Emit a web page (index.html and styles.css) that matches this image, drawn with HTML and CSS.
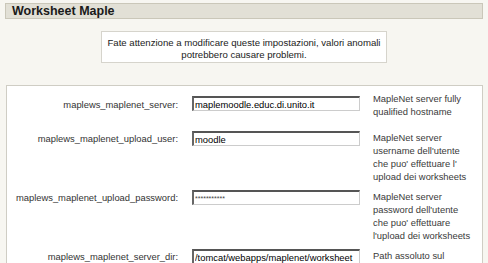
FILE: index.html
```html
<!DOCTYPE html>
<html lang="it">
<head>
    <meta charset="UTF-8">
    <title>Worksheet Maple</title>
    <link rel="stylesheet" href="styles.css">
</head>
<body>
    <h2 class="main-title">Worksheet Maple</h2>

    <div class="notice">
        Fate attenzione a modificare queste impostazioni, valori anomali<br>
        potrebbero causare problemi.
    </div>

    <div class="settings">
        <div class="setting first">
            <label class="label" for="server">maplews_maplenet_server:</label>
            <input class="field" id="server" type="text" value="maplemoodle.educ.di.unito.it">
            <div class="desc">MapleNet server fully<br>qualified hostname</div>
        </div>
        <div class="setting">
            <label class="label" for="user">maplews_maplenet_upload_user:</label>
            <input class="field" id="user" type="text" value="moodle">
            <div class="desc">MapleNet server<br>username dell'utente<br>che puo' effettuare l'<br>upload dei worksheets</div>
        </div>
        <div class="setting">
            <label class="label" for="password">maplews_maplenet_upload_password:</label>
            <input class="field secret" id="password" type="text" value="***********">
            <div class="desc">MapleNet server<br>password dell'utente<br>che puo' effettuare<br>l'upload dei worksheets</div>
        </div>
        <div class="setting">
            <label class="label" for="dir">maplews_maplenet_server_dir:</label>
            <input class="field" id="dir" type="text" value="/tomcat/webapps/maplenet/worksheet">
            <div class="desc">Path assoluto sul</div>
        </div>
    </div>
</body>
</html>
```

FILE: styles.css
```css
body {
    margin: 0;
    padding: 3px 5px 0 5px;
    background-color: #f7f6f1;
    color: #333;
    font-family: "Liberation Sans", Arial, sans-serif;
    font-size: 9.4px;
    overflow: hidden;
}

.main-title {
    margin: 0;
    padding: 0 6px;
    height: 14px;
    line-height: 14px;
    font-size: 12.5px;
    font-weight: bold;
    color: #1a1a1a;
    background-color: #e2e0d6;
    border: 1px solid #cac7b9;
}

.notice {
    width: 284px;
    margin: 12px auto 0 auto;
    padding: 5px 0;
    height: 20px;
    line-height: 12px;
    text-align: center;
    white-space: nowrap;
    background-color: #fff;
    border: 1px solid #d6d4cc;
    font-size: 9.6px;
    color: #222;
}

.settings {
    margin: 22px 0 0 1px;
    padding-top: 6px;
    background-color: #fff;
    border: 1px solid #cfcdc4;
    height: 400px;
}

.setting {
    display: flex;
    align-items: flex-start;
    margin-bottom: 7px;
}

.setting.first {
    margin-bottom: 13px;
}

.label {
    width: 171px;
    padding-top: 2px;
    text-align: right;
    color: #333;
}

.first .label {
    padding-top: 7px;
}

.field {
    box-sizing: border-box;
    width: 168px;
    height: 15px;
    margin: 0 0 0 14px;
    padding: 0 1px;
    font-family: "Liberation Sans", Arial, sans-serif;
    font-size: 9.4px;
    color: #000;
    background-color: #fff;
    border-style: solid;
    border-width: 2px 1px 1px 2px;
    border-color: #555 #ccc #ccc #666;
}

.first .field {
    margin-top: 4px;
}

.field.secret {
    font-size: 7px;
    color: #444;
}

.desc {
    margin-left: 13px;
    line-height: 13px;
    white-space: nowrap;
    color: #3a3a3a;
}
```
